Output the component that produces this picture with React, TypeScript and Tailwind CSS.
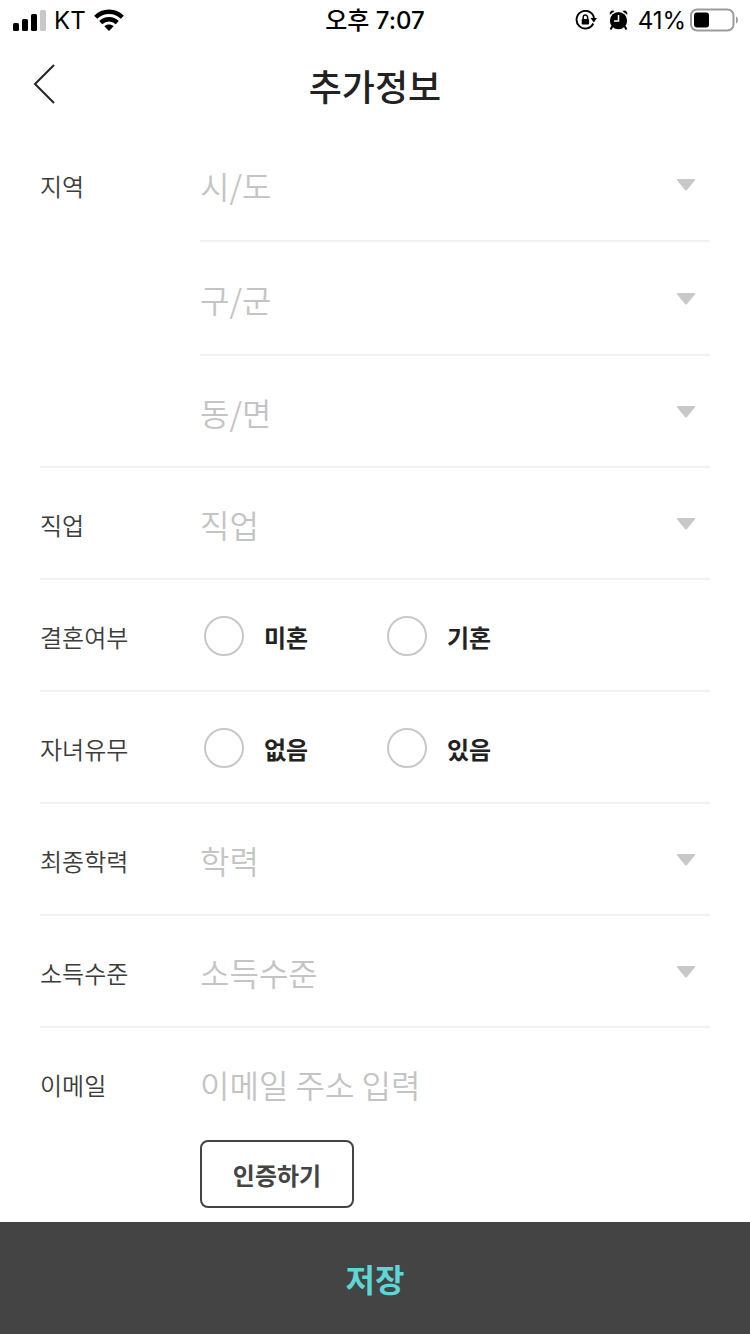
import type { ReactNode } from 'react'

function SignalIcon() {
  return (
    <svg width="34" height="22" viewBox="0 0 34 22" aria-hidden="true">
      <rect x="1" y="14" width="6" height="8" rx="1.5" />
      <rect x="10" y="10" width="6" height="12" rx="1.5" />
      <rect x="19" y="5" width="6" height="17" rx="1.5" />
      <rect x="28" y="1" width="6" height="21" rx="1.5" fill="#c8c8c8" />
    </svg>
  )
}

function WifiIcon() {
  return (
    <svg width="30" height="22" viewBox="0 0 30 22" aria-hidden="true">
      <g fill="none" stroke="#000" strokeWidth="4.4">
        <path d="M1.7 8.2C9 1 21 1 28.3 8.2" />
        <path d="M6.700 13.600C11.500 9.100 18.500 9.100 23.300 13.600" />
      </g>
      <path d="M15 22l-4.700-4.700c2.600-2.300 6.800-2.300 9.400 0z" />
    </svg>
  )
}

function RotationLockIcon() {
  return (
    <svg width="22" height="20" viewBox="0 0 22 20" aria-hidden="true">
      <path d="M18.300 13.500A8.800 8.800 0 1 1 19 8" fill="none" stroke="#000" strokeWidth="1.900" />
      <path d="M15.500 8H22l-3.200 4.500z" />
      <rect x="6.700" y="9" width="7.400" height="5.600" rx="0.800" />
      <path d="M8.200 9V7.300a2.200 2.200 0 0 1 4.400 0V9" fill="none" stroke="#000" strokeWidth="1.500" />
    </svg>
  )
}

function AlarmIcon() {
  return (
    <svg width="19" height="20" viewBox="0 0 19 20" aria-hidden="true">
      <path d="M3.500 16l-2 3.500M15.500 16l2 3.500" stroke="#000" strokeWidth="2" />
      <circle cx="9.500" cy="10.700" r="8.600" />
      <path
        d="M0.800 5.200C-0.500 1.500 3-1 6 1zM18.200 5.200C19.500 1.500 16-1 13 1z"
        stroke="#fff"
        strokeWidth="0.600"
      />
      <path d="M9.500 5v6H5" fill="none" stroke="#fff" strokeWidth="1.500" />
    </svg>
  )
}

function BatteryIcon() {
  return (
    <svg width="48" height="24" viewBox="0 0 48 24" aria-hidden="true">
      <rect x="1" y="1.500" width="42.500" height="21" rx="6" fill="none" stroke="#9b9b9b" strokeWidth="2" />
      <rect x="4" y="4.500" width="15" height="15" rx="3" />
      <path d="M46 8.500c2.600 1 2.600 6 0 7z" fill="#9b9b9b" />
    </svg>
  )
}

function StatusBar() {
  return (
    <div className="grid h-10 grid-cols-[1fr_auto_1fr] items-center px-3 font-[Inter,'Noto_Sans_CJK_KR',sans-serif] text-2xl text-black">
      <div className="flex items-center gap-2">
        <SignalIcon />
        <span className="pt-0.5">KT</span>
        <WifiIcon />
      </div>
      <span className="pt-0.5 font-medium">오후 7:07</span>
      <div className="flex items-center justify-end gap-2.5">
        <div className="flex items-center gap-3">
          <RotationLockIcon />
          <AlarmIcon />
        </div>
        <div className="flex items-center gap-1">
          <span className="pt-0.5">41%</span>
          <BatteryIcon />
        </div>
      </div>
    </div>
  )
}

function Header() {
  return (
    <header className="grid h-22 grid-cols-[1fr_auto_1fr] items-center px-8">
      <button type="button" aria-label="뒤로" className="w-6">
        <svg width="24" height="40" viewBox="0 0 24 40" fill="none" stroke="#222" strokeWidth="2" aria-hidden="true">
          <path d="M22 1L3 20l19 19" />
        </svg>
      </button>
      <h1 className="pt-0.5 text-4xl font-medium text-[#222]">추가정보</h1>
    </header>
  )
}

type SelectProps = {
  id: string
  placeholder: string
  label?: string
}

function Select({ id, placeholder, label }: SelectProps) {
  return (
    <div className="grid h-full items-center">
      <select
        id={id}
        aria-label={label}
        defaultValue=""
        className="col-start-1 row-start-1 h-full w-full appearance-none bg-transparent pt-0.5 text-[32px] font-[350] text-[#c4c4c4] outline-none"
      >
        <option value="">{placeholder}</option>
      </select>
      <svg
        width="20"
        height="12"
        viewBox="0 0 20 12"
        aria-hidden="true"
        className="pointer-events-none col-start-1 row-start-1 mt-0.5 mr-3.5 justify-self-end"
      >
        <path d="M1.500 0h17q1 0.500 0.300 1.500L11 11q-1 1-2 0L1.200 1.500Q0.500 0.500 1.500 0z" fill="#c8c8c8" />
      </svg>
    </div>
  )
}

type RadioGroupProps = {
  name: string
  options: string[]
}

function RadioGroup({ name, options }: RadioGroupProps) {
  return (
    <div role="radiogroup" aria-labelledby={`${name}-label`} className="flex h-full items-center pt-0.5 pl-1">
      {options.map((option) => (
        <label key={option} className="flex w-[183px] items-center gap-5 text-2xl font-bold text-[#222]">
          <input
            type="radio"
            name={name}
            value={option}
            className="size-10 appearance-none rounded-full border-2 border-[#c8c8c8] checked:border-[12px] checked:border-[#5fd6d6]"
          />
          <span className="pt-0.5">{option}</span>
        </label>
      ))}
    </div>
  )
}

type RowProps = {
  label: string
  htmlFor?: string
  labelId?: string
  children: ReactNode
}

function Row({ label, htmlFor, labelId, children }: RowProps) {
  return (
    <div className="flex h-28 border-b-2 border-[#f2f2f2]">
      <div className="flex w-40 items-center pt-1 text-2xl font-[350] text-[#3c3c3c]">
        {htmlFor ? <label htmlFor={htmlFor}>{label}</label> : <span id={labelId}>{label}</span>}
      </div>
      <div className="flex-1">{children}</div>
    </div>
  )
}

export default function App() {
  return (
    <div className="flex min-h-screen flex-col bg-white font-['Noto_Sans_CJK_KR',sans-serif]">
      <StatusBar />
      <Header />

      <form className="flex flex-1 flex-col">
        <div className="flex-1 px-10">
          <div className="flex border-b-2 border-[#f2f2f2]">
            <label htmlFor="city" className="flex h-28 w-40 items-center pt-1 text-2xl font-[350] text-[#3c3c3c]">
              지역
            </label>
            <div className="flex-1">
              <div className="h-[114px] border-b-2 border-[#f2f2f2]">
                <Select id="city" placeholder="시/도" />
              </div>
              <div className="h-[114px] border-b-2 border-[#f2f2f2]">
                <Select id="district" placeholder="구/군" label="구/군" />
              </div>
              <div className="h-[110px]">
                <Select id="town" placeholder="동/면" label="동/면" />
              </div>
            </div>
          </div>

          <Row label="직업" htmlFor="job">
            <Select id="job" placeholder="직업" />
          </Row>
          <Row label="결혼여부" labelId="marriage-label">
            <RadioGroup name="marriage" options={['미혼', '기혼']} />
          </Row>
          <Row label="자녀유무" labelId="children-label">
            <RadioGroup name="children" options={['없음', '있음']} />
          </Row>
          <Row label="최종학력" htmlFor="education">
            <Select id="education" placeholder="학력" />
          </Row>
          <Row label="소득수준" htmlFor="income">
            <Select id="income" placeholder="소득수준" />
          </Row>

          <div className="flex pb-3.5">
            <label htmlFor="email" className="flex h-28 w-40 items-center pt-0.5 text-2xl font-[350] text-[#3c3c3c]">
              이메일
            </label>
            <div className="flex-1">
              <input
                id="email"
                type="email"
                placeholder="이메일 주소 입력"
                className="h-28 w-full text-[32px] font-[350] text-[#222] outline-none placeholder:text-[#c4c4c4]"
              />
              <button
                type="button"
                className="block h-[68px] w-[154px] rounded-lg border-2 border-[#444] pt-0.5 text-2xl font-bold text-[#444]"
              >
                인증하기
              </button>
            </div>
          </div>
        </div>

        <button type="submit" className="sticky bottom-0 h-28 w-full bg-[#444] text-[32px] font-bold text-[#5fd6d6]">
          저장
        </button>
      </form>
    </div>
  )
}
